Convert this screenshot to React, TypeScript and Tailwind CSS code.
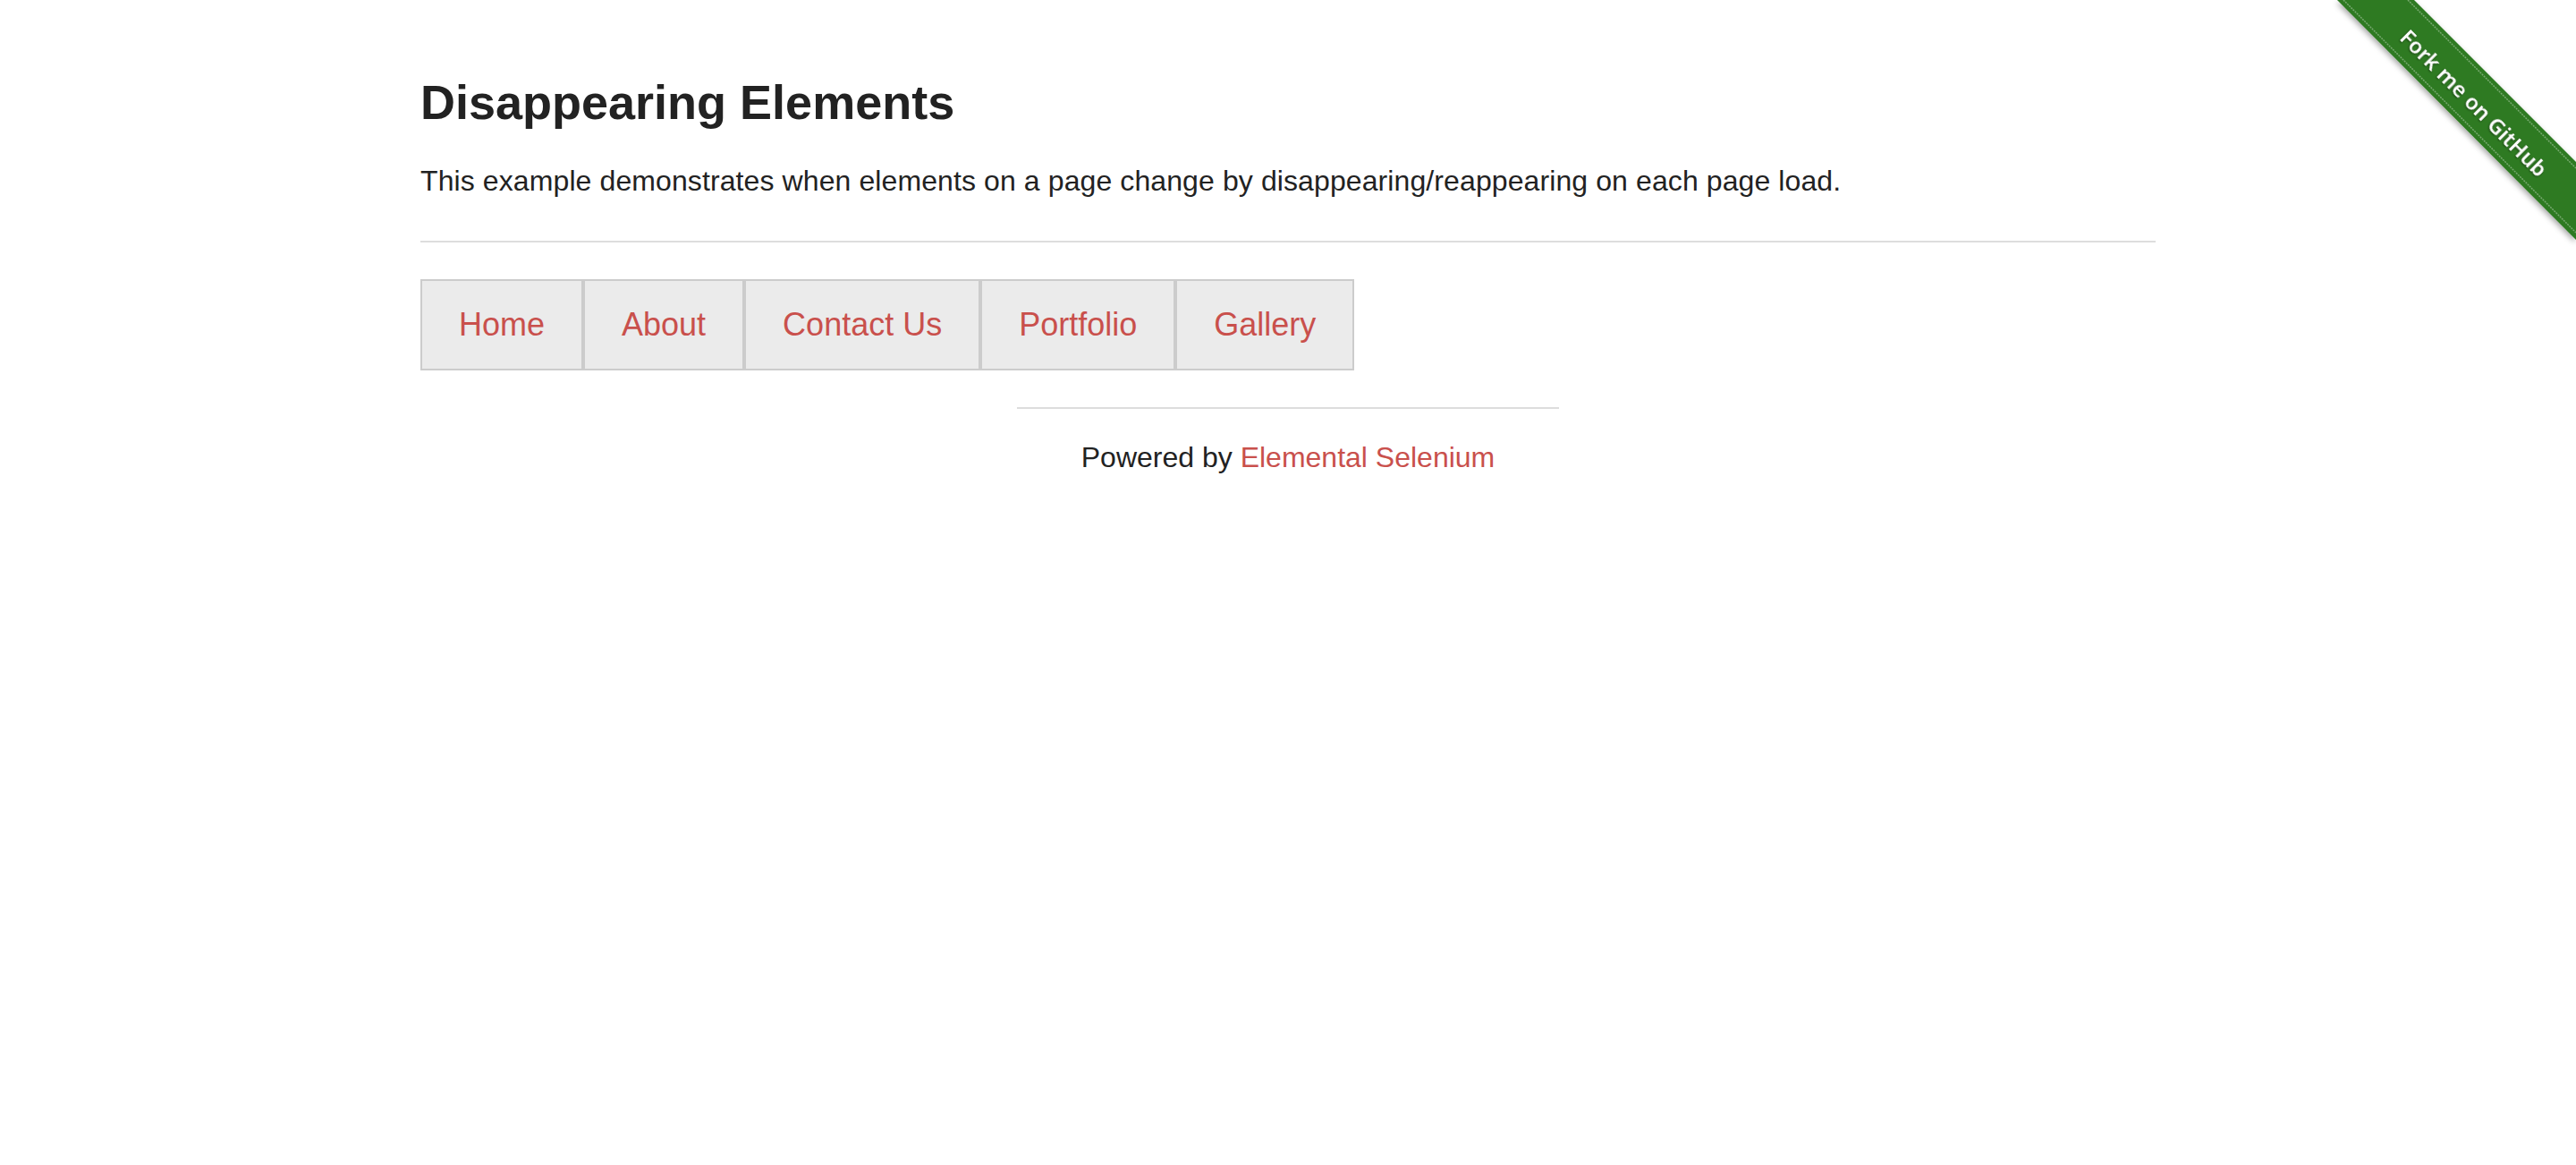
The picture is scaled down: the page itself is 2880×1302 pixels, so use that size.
import React from "react";

const tabs = ["Home", "About", "Contact Us", "Portfolio", "Gallery"];

function Ribbon() {
  return (
    <svg
      className="absolute top-0 right-0"
      width="298"
      height="298"
      viewBox="0 0 298 298"
    >
      <defs>
        <filter id="rs" x="-20%" y="-20%" width="140%" height="140%">
          <feDropShadow dx="-1" dy="3" stdDeviation="3" floodColor="#000" floodOpacity="0.35" />
        </filter>
      </defs>
      <polygon points="31,0 117,0 298,181 298,268" fill="#2f7a20" filter="url(#rs)" />
      <line x1="38" y1="0" x2="298" y2="260" stroke="#ffffff" strokeOpacity="0.35" strokeWidth="1.5" strokeDasharray="2 1" />
      <line x1="110" y1="0" x2="298" y2="188" stroke="#ffffff" strokeOpacity="0.35" strokeWidth="1.5" strokeDasharray="2 1" />
      <text
        x="184"
        y="115"
        transform="rotate(45 184 115)"
        textAnchor="middle"
        dominantBaseline="central"
        fill="#ffffff"
        fontFamily="'Noto Sans', 'Liberation Sans', sans-serif"
        fontWeight="600"
        fontSize="24"
        style={{ filter: "drop-shadow(0 1px 1px rgba(0,0,0,0.5))" }}
      >
        Fork me on GitHub
      </text>
    </svg>
  );
}

export default function App() {
  return (
    <div
      className="relative min-h-[1302px] w-full bg-white text-[#222222]"
      style={{ fontFamily: "'Liberation Sans', Arial, Helvetica, sans-serif" }}
    >
      <Ribbon />
      <div className="mx-auto w-[1940px] pt-[87px]">
        <h3 className="m-0 text-[54px] leading-[54px] font-bold text-[#222222]">
          Disappearing Elements
        </h3>
        <p className="mt-[37px] text-[32px] leading-[48px] tracking-[0.1px] text-[#222222]">
          This example demonstrates when elements on a page change by
          disappearing/reappearing on each page load.
        </p>
        <div className="mt-[43px] h-[2px] w-full bg-[#dddddd]" />
        <ul className="mt-[41px] flex">
          {tabs.map((t) => (
            <li
              key={t}
              className="flex h-[102px] items-center border-2 border-[#cccccc] bg-[#ebebeb] px-[41px]"
            >
              <a className="text-[36px] leading-[36px] text-[#c9504c]" href="#">
                {t}
              </a>
            </li>
          ))}
        </ul>
        <div className="mt-[41px] flex flex-col items-center">
          <div className="h-[2px] w-[606px] bg-[#dddddd]" />
          <div className="mt-[30px] text-[32px] leading-[48px] text-[#222222]">
            Powered by{" "}
            <a className="text-[#c9504c]" href="#">
              Elemental Selenium
            </a>
          </div>
        </div>
      </div>
    </div>
  );
}
